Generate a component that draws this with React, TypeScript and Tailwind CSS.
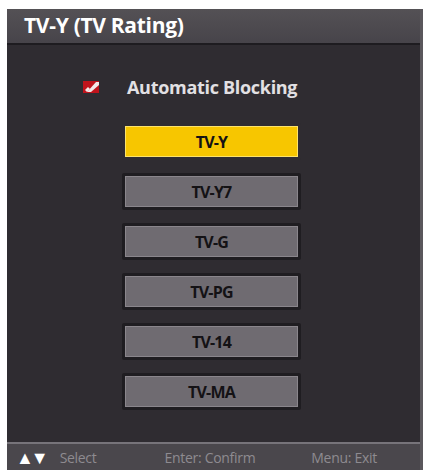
const ratings = ["TV-Y", "TV-Y7", "TV-G", "TV-PG", "TV-14", "TV-MA"];

function CheckMark() {
  return (
    <svg width="18" height="14" viewBox="0 0 18 14">
      <rect x="1" y="1" width="16" height="12" fill="#c0141c" />
      <path d="M5 12 L14 2 L17 2 L17 5 L9 12 Z" fill="#f4e8e8" />
      <path d="M3 10 L6 7 L8 9 L5 12 Z" fill="#f4e8e8" />
    </svg>
  );
}

export default function App() {
  const selected = 0;
  return (
    <div className="w-[426px] h-[470px] bg-white pt-[9px] pl-[7px] overflow-hidden" style={{ fontFamily: '"Open Sans", "Noto Sans", sans-serif' }}>
      <div className="w-[416px] h-[461px] flex flex-col border-r-[3px] border-[#5a575c]">
        {/* Header */}
        <div className="h-[36px] bg-gradient-to-b from-[#545155] to-[#47444a] border-b-2 border-[#1e1c20] flex items-center pl-[17px]">
          <span className="text-white font-bold text-[21px] tracking-[-0.3px]">TV-Y (TV Rating)</span>
        </div>

        {/* Body */}
        <div className="flex-1 bg-[#2f2c31] flex flex-col">
          <div className="mt-[30px] h-[24px] w-full flex items-center pl-[75px]">
            <CheckMark />
            <span className="ml-[27px] text-[#e2e0e3] font-bold text-[18px] tracking-[-0.3px]">Automatic Blocking</span>
          </div>
          <div className="mt-[24px] flex flex-col gap-[13px] pl-[115px]">
            {ratings.map((r, i) => (
              <div key={r} className={`w-fit p-[3px] rounded-[2px] ${i === selected ? "bg-[#2f2c31]" : "bg-[#1f1d21]"}`}>
                <div
                  className={`w-[173px] h-[31px] flex items-center justify-center font-bold text-[16px] tracking-[-0.8px] text-[#141215] border ${
                    i === selected ? "bg-[#f7c600] border-[#fde36a]" : "bg-[#6f6b71] border-[#8a868c]"
                  }`}
                >
                  {r}
                </div>
              </div>
            ))}
          </div>
        </div>

        {/* Footer */}
        <div className="h-[28px] bg-[#4a474c] border-t-2 border-[#77747a] flex items-center text-[14px] text-[#8e8b90] tracking-[-0.3px]">
          <span className="pl-[9px] flex items-center">
            <span className="text-white text-[18px] leading-none tracking-[-3px]">▲▼</span>
            <span className="ml-[14px]">Select</span>
          </span>
          <span className="ml-[68px]">Enter: Confirm</span>
          <span className="ml-[56px]">Menu: Exit</span>
        </div>
      </div>
    </div>
  );
}
